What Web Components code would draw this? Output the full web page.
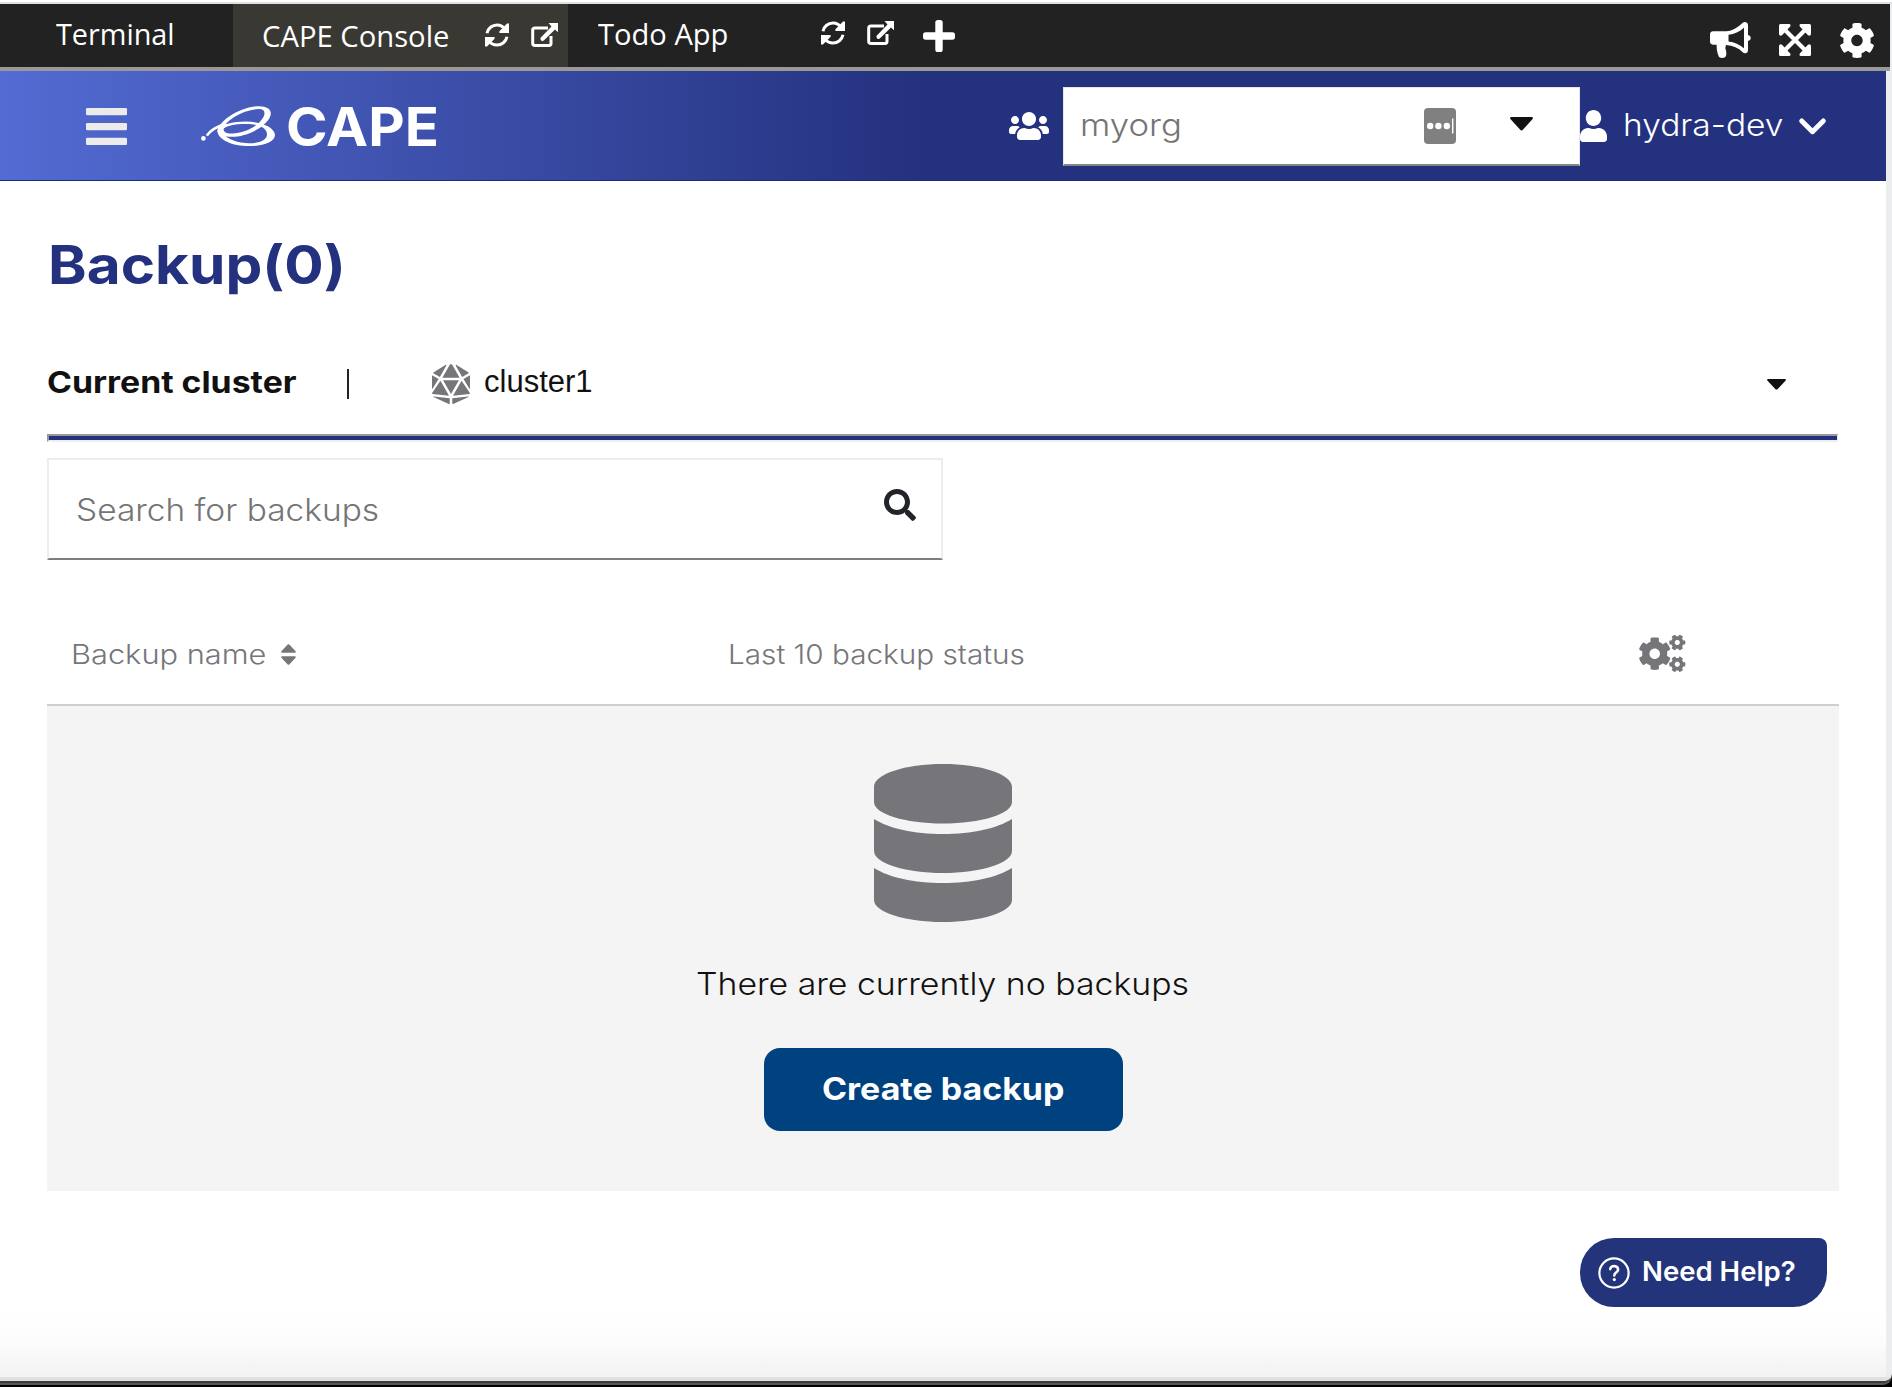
<!DOCTYPE html>
<html lang="en">
<head>
<meta charset="utf-8">
<title>CAPE Console</title>
<style>
html,body{margin:0;padding:0;background:#fff;overflow:hidden}
body{font-family:Inter,"Noto Sans",sans-serif;color:#111}
</style>
</head>
<body>
<cape-window>
  <tab-bar slot="tabs"></tab-bar>
  <cape-header slot="header"></cape-header>
  <backup-view></backup-view>
  <help-button slot="help">Need Help?</help-button>
</cape-window>
<script>
const define = (name, html, after) => {
  const t = document.createElement('template');
  t.innerHTML = html;
  customElements.define(name, class extends HTMLElement {
    connectedCallback() {
      if (this.shadowRoot) return;
      this.attachShadow({mode: 'open'}).append(t.content.cloneNode(true));
      if (after) after(this, this.shadowRoot);
    }
  });
};

const COG = 'M487.4 315.7l-42.6-24.6c4.3-23.2 4.3-47 0-70.2l42.6-24.6c4.9-2.8 7.1-8.6 5.5-14-11.1-35.6-30-67.8-54.7-94.6-3.8-4.1-10-5.1-14.8-2.3L380.8 110c-17.9-15.4-38.5-27.3-60.8-35.1V25.8c0-5.6-3.9-10.5-9.4-11.7-36.7-8.2-74.3-7.8-109.2 0-5.5 1.2-9.4 6.1-9.4 11.7V75c-22.2 7.9-42.8 19.8-60.8 35.1L88.7 85.5c-4.9-2.8-11-1.9-14.8 2.3-24.7 26.7-43.6 58.9-54.7 94.6-1.7 5.4.6 11.2 5.5 14L67.3 221c-4.3 23.2-4.3 47 0 70.2l-42.6 24.6c-4.9 2.8-7.1 8.6-5.5 14 11.1 35.6 30 67.8 54.7 94.6 3.8 4.1 10 5.1 14.8 2.3l42.6-24.6c17.9 15.4 38.5 27.3 60.8 35.1v49.2c0 5.6 3.9 10.5 9.4 11.7 36.7 8.2 74.3 7.8 109.2 0 5.5-1.2 9.4-6.1 9.4-11.7v-49.2c22.2-7.9 42.8-19.8 60.8-35.1l42.6 24.6c4.9 2.8 11 1.9 14.8-2.3 24.7-26.7 43.6-58.9 54.7-94.6 1.5-5.5-.7-11.3-5.6-14.1zM256 336c-44.1 0-80-35.9-80-80s35.9-80 80-80 80 35.9 80 80-35.9 80-80 80z';
const ICONS = {
  refresh: ['0 0 24 24', '<g fill="none" stroke="currentColor" stroke-width="3"><path d="M2 10.2C3 5.2 7.2 2 12 2c3.4 0 6.2 1.5 8.2 4.2"/><path d="M22 13.8C21 18.8 16.8 22 12 22c-3.4 0-6.200-1.500-8.200-4.200"/></g><path d="M24 .6V10H14.400V8.200L22 .6zM0 23.400V14H9.600v1.800L2 23.400z"/>'],
  external: ['0 0 27 24', '<path fill="none" stroke="currentColor" stroke-width="3" stroke-linejoin="round" d="M17 5H4Q1.700 5 1.700 7V20.500Q1.700 22.400 4 22.400H18Q20 22.400 20 20.500V13"/><path d="M17.500 0H27V9.200L24 6.500 12.800 17.600Q11.500 18.600 10.200 17.400T9.600 14.800L20.500 3.400z"/>'],
  plus: ['0 0 32 32', '<rect x="12.300" width="7.400" height="32" rx="2.600"/><rect y="12.300" width="32" height="7.400" rx="2.600"/>'],
  horn: ['0 0 41 36', '<path fill-rule="evenodd" d="M3 9.300H16C23 9 28 5 32.500 1Q34-.4 36 .3T38 3V13Q40.800 13.600 40.800 16T38 19V28.500Q38 30.600 36 31.200T32.500 30C28.500 26 23 23.500 16 23Q14.500 26 16.200 29.500 16.800 34.500 14.500 35.600 11.500 36.600 9 35 6.500 30 6.600 22.700H3Q0 22.300 0 19.500V12.500Q0 9.600 3 9.300zM18.500 12.700V19.400C24.500 20 29.500 22.500 34 26.300V5.700C29.500 9.700 24.500 12.100 18.500 12.700z"/>'],
  expand: ['0 0 32 32', '<path stroke="currentColor" stroke-width="4.200" d="M5 5L27 27M27 5L5 27"/><path d="M1.500 0H10Q12.300.3 11.200 2.500L3 11.300Q.4 12.400 0 10V1.500Q0 0 1.500 0zM30.500 0H22Q19.700.3 20.800 2.500L29 11.300Q31.600 12.400 32 10V1.500Q32 0 30.500 0zM1.500 32H10Q12.300 31.700 11.200 29.500L3 20.700Q.4 19.600 0 22V30.500Q0 32 1.500 32zM30.500 32H22Q19.700 31.700 20.800 29.500L29 20.700Q31.600 19.600 32 22V30.500Q32 32 30.500 32z"/>'],
  cog: ['17 8 478 496', `<path d="${COG}"/>`],
  cogs: ['0 0 47 37', `<g transform="translate(15.700 18.700) scale(.0655) translate(-256 -256)"><path d="${COG}"/></g><g transform="translate(38.300 7.500) rotate(30) scale(.0325) translate(-256 -256)"><path d="${COG}"/></g><g transform="translate(38.300 29.300) rotate(30) scale(.0325) translate(-256 -256)"><path d="${COG}"/></g>`],
  menu: ['0 0 41 37', '<rect width="41" height="7.200" rx="1.200"/><rect y="15" width="41" height="7.200" rx="1.200"/><rect y="29.800" width="41" height="7.200" rx="1.200"/>'],
  swirl: ['200 105 78 42', '<circle cx="203.400" cy="138.400" r="2.300"/><path fill="none" stroke="currentColor" stroke-width="2.600" d="M206.800 135.600C210.500 130 217 126.400 226 123.700"/><path fill-rule="evenodd" d="M217.500 130C220 124.500 233 121.600 246 121.600 263 121.700 275 128 275 135 274.800 142 263 146.200 249 146.100 232 145.900 216.800 139.500 217.500 130zM223 129.500C222 137 234 143 248.500 143.300 259 143.400 266.800 140.300 267 134.500 267 128 259 124.100 246.500 124 234 124 225 126 223 129.500z"/><path fill-rule="evenodd" d="M217.500 130.500C220 119.500 242 106.300 259 106.200 269.500 106.300 273 111.500 269.500 118 263.500 128.500 246 136.800 231.500 136.800 223 136.700 216.900 134.500 217.500 130.500zM223.500 129C223.500 132.300 227 133.700 232 133.500 245 133.100 258.500 126 263.300 117.300 266 111.900 264 109 258.500 109.100 244 109.700 225.300 120 223.500 129z"/>'],
  users: ['0 32 640 448', '<path d="M96 224c35.300 0 64-28.700 64-64s-28.700-64-64-64-64 28.700-64 64 28.700 64 64 64zm448 0c35.300 0 64-28.700 64-64s-28.700-64-64-64-64 28.700-64 64 28.700 64 64 64zm32 32h-64c-17.600 0-33.500 7.100-45.100 18.600 40.300 22.100 68.900 62 75.100 109.400h66c17.700 0 32-14.300 32-32v-32c0-35.300-28.700-64-64-64zm-256 0c61.900 0 112-50.100 112-112S381.900 32 320 32 208 82.100 208 144s50.100 112 112 112zm76.800 32h-8.300c-20.800 10-43.900 16-68.500 16s-47.600-6-68.500-16h-8.300C179.600 288 128 339.600 128 403.200V432c0 26.500 21.500 48 48 48h288c26.500 0 48-21.500 48-48v-28.800c0-63.600-51.600-115.200-115.200-115.200zm-223.700-13.400C161.500 263.100 145.600 256 128 256H64c-35.300 0-64 28.700-64 64v32c0 17.700 14.300 32 32 32h65.900c6.300-47.400 34.900-87.300 75.200-109.400z"/>'],
  user: ['0 0 448 512', '<path d="M224 256c70.700 0 128-57.300 128-128S294.700 0 224 0 96 57.300 96 128s57.300 128 128 128zm89.600 32h-16.700c-22.200 10.200-46.900 16-72.900 16s-50.600-5.800-72.900-16h-16.700C60.200 288 0 348.200 0 422.400V464c0 26.500 21.500 48 48 48h352c26.500 0 48-21.500 48-48v-41.600c0-74.200-60.200-134.400-134.400-134.400z"/>'],
  vault: ['0 0 32 36', '<rect width="32" height="36" rx="4" fill="#808080"/><g fill="#fff"><circle cx="6.200" cy="18" r="3.200"/><circle cx="14.400" cy="18" r="3.200"/><circle cx="22.800" cy="18" r="3.200"/><rect x="28" y="10.500" width="1.400" height="15"/></g>'],
  caret: ['0 0 23 14', '<path d="M1.300 0H21.700Q23.600.3 22.600 2L13 12.600Q11.500 14.300 10 12.600L.4 2Q-.6.3 1.300 0z"/>'],
  chevron: ['0 0 27 17', '<path fill="none" stroke="currentColor" stroke-width="5" stroke-linecap="round" stroke-linejoin="round" d="M2.700 3L13.500 13.700 24.300 3"/>'],
  dice: ['0 0 480 512', '<path d="M106.750 215.060L1.200 370.950c-3.080 5 .1 11.500 5.930 12.140l208.260 22.070-108.640-190.100zM7.410 315.430L82.700 193.080 6.060 147.100c-2.670-1.620-6.060.32-6.060 3.430v162.810c0 4.030 5.290 5.530 7.410 2.090zM18.250 423.600l194.400 87.660c5.300 2.450 11.350-1.430 11.350-7.260v-65.670l-203.550-22.300c-4.450-.5-6.230 5.590-2.200 7.570zm81.220-257.780L179.400 22.880c4.340-7.060-3.590-15.250-10.780-11.140L17.810 110.350c-2.470 1.620-2.390 5.260.13 6.780l81.530 48.690zM240 176h109.210L253.630 7.620C250.500 2.540 245.250 0 240 0s-10.500 2.540-13.630 7.620L130.790 176H240zm233.940-28.900l-76.640 45.990 75.290 122.350c2.110 3.440 7.410 1.940 7.410-2.100V150.530c0-3.110-3.390-5.050-6.060-3.430zm-93.410 18.720l81.530-48.700c2.530-1.520 2.600-5.160.13-6.780l-150.810-98.600c-7.190-4.110-15.120 4.080-10.780 11.140l79.930 142.940zm79.020 250.210L256 438.320v65.670c0 5.840 6.050 9.710 11.350 7.260l194.400-87.660c4.030-1.970 2.250-8.060-2.200-7.560zm-86.300-200.970l-108.630 190.100 208.260-22.070c5.830-.65 9.010-7.140 5.930-12.140L373.250 215.060zM240 208H139.570L240 383.750 340.430 208H240z"/>'],
  search: ['0 0 512 512', '<path d="M505 442.700L405.300 343c-4.500-4.500-10.600-7-17-7H372c27.600-35.300 44-79.700 44-128C416 93.100 322.900 0 208 0S0 93.100 0 208s93.100 208 208 208c48.300 0 92.700-16.400 128-44v16.300c0 6.400 2.500 12.500 7 17l99.700 99.700c9.400 9.400 24.600 9.400 33.900 0l28.300-28.300c9.400-9.400 9.400-24.600.1-34zM208 336c-70.700 0-128-57.200-128-128 0-70.700 57.200-128 128-128 70.700 0 128 57.200 128 128 0 70.700-57.200 128-128 128z"/>'],
  sort: ['0 0 15 21', '<path d="M6.700.6Q7.500-.2 8.300.6L14.600 7.300Q15.300 8.500 14 8.700H1Q-.3 8.500.4 7.300zM6.700 20.400Q7.500 21.200 8.300 20.400L14.600 13.700Q15.300 12.500 14 12.300H1Q-.3 12.500.4 13.700z"/>'],
  database: ['0 0 138 158', '<path d="M0 23C0 10 31 0 69 0s69 10 69 23v15c0 12-31 21.500-69 21.500S0 50 0 38zM0 55c15 9.500 40 15 69 15s54-5.500 69-15v32c0 12-31 22-69 22S0 99 0 87zM0 104c15 9.500 40 15 69 15s54-5.500 69-15v32c0 12-31 22-69 22S0 148 0 136z"/>'],
  help: ['0 0 32 32', '<circle cx="16" cy="16" r="14.600" fill="none" stroke="currentColor" stroke-width="2.200"/><path fill="none" stroke="currentColor" stroke-width="2.500" stroke-linecap="round" stroke-linejoin="round" d="M12.200 12.200Q12.500 9 16.200 8.900 20 9.100 20.100 12.400 20 14.400 18 15.600 16.300 16.600 16.300 18.600"/><circle cx="16.300" cy="22.600" r="1.600"/>']
};

define('cape-icon', '<style>:host{display:block;flex:none}svg{display:block;width:100%;height:100%;overflow:visible}</style><svg fill="currentColor" preserveAspectRatio="none" aria-hidden="true"></svg>', (el, root) => {
  const [box, body] = ICONS[el.getAttribute('name')];
  const svg = root.querySelector('svg');
  svg.setAttribute('viewBox', box);
  svg.innerHTML = body;
  el.style.width = el.getAttribute('w') + 'px';
  el.style.height = el.getAttribute('h') + 'px';
});

/* A single line of text stretched to an exact width. */
define('fit-text', '<style>:host{display:block;flex:none;height:40px;line-height:40px;white-space:nowrap}span{display:inline-block;transform-origin:0 50%}</style><span><slot></slot></span>', (el, root) => {
  const w = +el.getAttribute('w');
  el.style.fontSize = el.getAttribute('size') + 'px';
  const span = root.querySelector('span');
  el.style.width = w + 'px';
  span.style.transform = `scaleX(${w / span.offsetWidth})`;
});

define('tab-bar', `<style>
:host{display:flex;align-items:flex-start;box-sizing:border-box;width:1890px;height:67px;background:#222;border-bottom:4px solid #9b9998;color:#fff;font-family:"Open Sans","Noto Sans",sans-serif;font-weight:450}
div{display:flex;align-items:flex-start;height:63px}
.active{background:#3a3833;width:335px}
.tools{margin-left:auto;gap:28px;padding-right:16px}
</style>
<div style="width:233px"><fit-text w="119" size="30" style="margin:9.500px 0 0 55.500px">Terminal</fit-text></div>
<div class="active"><fit-text w="187" size="30" style="margin:11.500px 0 0 29px">CAPE Console</fit-text><cape-icon name="refresh" w="24" h="24" style="margin:19px 0 0 36px"></cape-icon><cape-icon name="external" w="27" h="24" style="margin:19px 0 0 22px"></cape-icon></div>
<div><fit-text w="130" size="30" style="margin:9.500px 0 0 30px">Todo App</fit-text><cape-icon name="refresh" w="24" h="24" style="margin:17px 0 0 92.500px"></cape-icon><cape-icon name="external" w="27" h="24" style="margin:17px 0 0 22px"></cape-icon><cape-icon name="plus" w="32" h="32" style="margin:16px 0 0 29px"></cape-icon></div>
<div class="tools"><cape-icon name="horn" w="41" h="36" style="margin-top:18px"></cape-icon><cape-icon name="expand" w="32" h="32" style="margin-top:20px"></cape-icon><cape-icon name="cog" w="34" h="35" style="margin:18.500px 0 0 1px"></cape-icon></div>`);

define('org-select', `<style>
:host{display:flex;align-items:flex-start;box-sizing:border-box;flex:none;width:517px;height:79px;background:#fff;border:1px solid #e9e7e6;border-bottom:2px solid #858783;color:#757575;font-weight:300}
</style>
<fit-text w="102" size="31" style="margin:17px 0 0 16px"><slot></slot></fit-text><cape-icon name="vault" w="32" h="36" style="margin:20px 0 0 241.500px"></cape-icon><cape-icon name="caret" w="23" h="14" style="margin:29px 0 0 54px;color:#111"></cape-icon>`);

define('cape-header', `<style>
:host{display:flex;align-items:flex-start;box-sizing:border-box;width:1886px;height:110px;color:#fff;border-bottom:1px solid #1b2a83;background:linear-gradient(90deg,#536bd3 0,#4a60c3 9%,#34459b 32%,#24317e 49%)}
</style>
<cape-icon name="menu" w="41" h="37" style="margin:37px 0 0 86px;color:#ebebeb"></cape-icon>
<cape-icon name="swirl" w="78" h="42" style="margin:34px 0 0 73px"></cape-icon>
<fit-text w="153" size="53" style="margin:35.500px 0 0 7.500px;font-weight:750">CAPE</fit-text>
<cape-icon name="users" w="40" h="28" style="margin:41px 0 0 570px"></cape-icon>
<org-select style="margin:16px 0 0 14.500px">myorg</org-select>
<cape-icon name="user" w="27" h="32" style="margin:39px 0 0"></cape-icon>
<fit-text w="161" size="31" style="margin:34px 0 0 16px;font-weight:300">hydra-dev</fit-text>
<cape-icon name="chevron" w="27" h="17" style="margin:47px 0 0 15px"></cape-icon>`);

define('cluster-select', `<style>
:host{display:flex;align-items:flex-start;box-sizing:border-box;height:87px}
i{width:2px;height:30px;background:#222;margin:16px 0 0 51px}
</style>
<fit-text w="249" size="30" style="margin:8.500px 0 0;font-weight:700">Current cluster</fit-text><i></i>
<cape-icon name="dice" w="38" h="40" style="margin:10.500px 0 0 82.500px;color:#76757a"></cape-icon>
<fit-text w="109" size="31" style="margin:9px 0 0 14.500px;font-family:'Liberation Sans',sans-serif"><slot></slot></fit-text>
<cape-icon name="caret" w="19" h="11" style="margin:25.500px 52.500px 0 auto"></cape-icon>`);

define('search-box', `<style>
:host{display:flex;align-items:flex-start;box-sizing:border-box;width:896px;height:102px;border:2px solid #ededed;border-bottom:2px solid #7e7e7e;color:#757575}
</style>
<fit-text w="303" size="30.500" style="margin:29.500px 0 0 27px;font-weight:350"><slot></slot></fit-text>
<cape-icon name="search" w="32" h="32" style="margin:28.500px 25px 0 auto;color:#212529"></cape-icon>`);

define('backup-table', `<style>
:host{display:block;width:1792px}
.head{display:flex;align-items:flex-start;box-sizing:border-box;height:78px;border-bottom:2px solid #cfcfcf;color:#76757a;font-weight:350}
.empty{display:flex;flex-direction:column;align-items:center;height:485px;background:#f4f4f4}
button{all:unset;display:flex;align-items:center;justify-content:center;width:359px;height:83px;border-radius:16px;background:#004280;color:#fff;font-weight:700;margin-top:43.500px}
</style>
<div class="head"><fit-text w="195" size="27" style="margin:7px 0 0 23.500px">Backup name</fit-text><cape-icon name="sort" w="15" h="21" style="margin:16.500px 0 0 15px"></cape-icon><fit-text w="297" size="27" style="margin:7px 0 0 432px">Last 10 backup status</fit-text><cape-icon name="cogs" w="47" h="37" style="margin:7.500px 0 0 614px"></cape-icon></div>
<div class="empty"><cape-icon name="database" w="138" h="158" style="margin-top:58.500px;color:#76757a"></cape-icon><fit-text w="493" size="31" style="margin:42px 1px 0 0;font-weight:350">There are currently no backups</fit-text><button><fit-text w="242" size="31" style="margin:-1px 1px 0 0">Create backup</fit-text></button></div>`);

define('backup-view', `<style>
:host{display:flex;flex-direction:column;padding:64px 0 0 47px}
h1{margin:0;color:#24317e;font-weight:700}
hr{box-sizing:border-box;width:1791px;height:8px;margin:-6.500px 0 16.500px;background:#24317e;border:solid;border-width:2px 1px 2px 2px;border-color:#999 #eee #eee #999}
</style>
<h1><fit-text w="298" size="53" style="margin-left:1px">Backup(0)</fit-text></h1>
<cluster-select style="margin-top:68px;width:1791px">cluster1</cluster-select>
<hr>
<search-box>Search for backups</search-box>
<backup-table style="margin-top:67.500px"></backup-table>`);

define('help-button', `<style>
:host{display:flex;align-items:center;box-sizing:border-box;width:247px;height:69px;padding-left:17.500px;gap:12.500px;border-radius:34px 8px 34px 34px;background:#23347b;color:#fff;font-weight:600}
</style><cape-icon name="help" w="32" h="32"></cape-icon><fit-text w="154" size="27" style="margin-top:-1px"><slot></slot></fit-text>`);

define('cape-window', `<style>
:host{display:flex;flex-direction:column;width:1892px;height:1387px;background:#000;box-sizing:border-box}
.frame{height:1381px;border-radius:0 0 9px 0;background:#ecedef;overflow:hidden;border-bottom:2px solid #3c3d3b;box-shadow:0 2px 0 #565a52}
.top{height:4px;background:linear-gradient(#fff 50%,#e0e0e0 50%)}
main{display:flex;flex-direction:column;width:1886px;height:1196px;background:linear-gradient(#fff 94.500%,#fcfcfc 97%,#f2f2f2 100%)}
.foot{height:4px;background:#dfe0df}
.help{display:flex;margin:47.500px 0 0 1580px}
</style>
<div class="frame"><div class="top"></div><slot name="tabs"></slot><slot name="header"></slot><main><slot></slot><div class="help"><slot name="help"></slot></div></main><div class="foot"></div></div>`);
</script>
</body>
</html>
